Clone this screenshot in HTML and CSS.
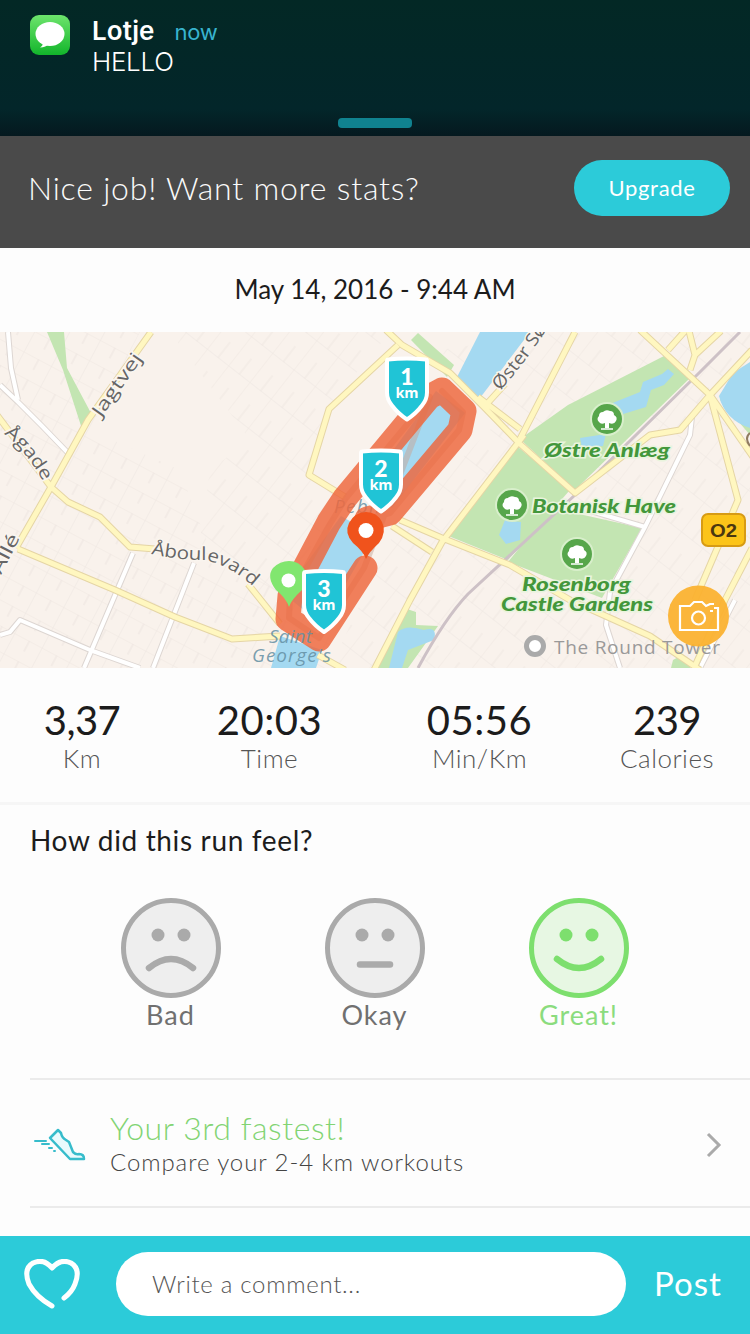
FILE: index.html
```html
<!DOCTYPE html>
<html lang="en">
<head>
<meta charset="utf-8">
<title>Run summary</title>
<link rel="stylesheet" href="styles.css">
</head>
<body>
<div class="screen">
  <header class="notice">
    <svg class="notice-icon" viewBox="0 0 40 40"><defs><linearGradient id="msg" x2="0" y2="1"><stop offset="0" stop-color="#6de46c"/><stop offset="1" stop-color="#12b52b"/></linearGradient></defs><rect width="40" height="40" rx="9" fill="url(#msg)"/><ellipse cx="20" cy="19" rx="14.500" ry="12" fill="#fff"/><path d="M13 27q0 4-3 5.500q6 0 9-4z" fill="#fff"/></svg>
    <div class="notice-text">
      <div class="notice-head"><b class="sender">Lotje</b><span class="when">now</span></div>
      <div class="message">HELLO</div>
    </div>
    <div class="grabber"></div>
  </header>

  <section class="upsell"><span class="upsell-text">Nice job! Want more stats?</span><button class="upgrade">Upgrade</button></section>
  <div class="date">May 14, 2016 - 9:44 AM</div>

  <svg class="map" viewBox="0 332 750 336">
    <defs>
      <pattern id="blocksA" width="31" height="23" patternUnits="userSpaceOnUse" patternTransform="rotate(28)"><path d="M0 0H31M0 0V23M17 0V12" class="lane"/></pattern>
      <pattern id="blocksB" width="37" height="27" patternUnits="userSpaceOnUse" patternTransform="rotate(-52)"><path d="M0 0H37M0 0V27M0 14H20" class="lane"/></pattern>
      <g id="tree"><circle r="16" fill="#57a64b" stroke="#d8efcb" stroke-width="2"/><path d="M-2 9V4Q-6 6-8 3Q-11 0-8-3Q-8-7-4-7Q-1-10 3-8Q7-8 7-4Q11-2 9 2Q7 6 2 4V9Z" fill="#fff"/><path d="M-6 10H6" stroke="#fff" stroke-width="1.500"/></g>
      <path id="shield" d="M-19-29Q0-31 19-29Q20-29 20-27V4Q20 11 15 17Q9 25 0 31Q-9 25-15 17Q-20 11-20 4V-27Q-20-29-19-29Z" fill="#20c4d6" stroke="#fff" stroke-width="4" stroke-linejoin="round"/>
      <path id="labelJagtvej" d="M101 418L145 355"/>
      <path id="labelAgade" d="M4 434Q28 452 46 487"/>
      <path id="labelAlle" d="M1 575L22 534"/>
      <path id="labelAbou" d="M151 554Q178 560 204 560Q232 565 260 593"/>
      <path id="labelOster" d="M500 391Q526 362 550 324"/>
    </defs>
    <rect y="332" width="750" height="336" fill="#f9f2ec"/>
    <path d="M0 332H140L90 430L180 470L210 550L330 610V668H0Z" fill="url(#blocksA)"/>
    <path d="M170 332H390L330 405L310 480L350 500L270 600L200 540L210 470L250 440Z" fill="url(#blocksB)"/>
    <path d="M400 520L500 420L440 350L560 332H750V668H330Z" fill="url(#blocksB)"/>

    <g fill="#c3e5b2">
      <path d="M47 332H64L67 368L92 415L83 432L63 370Z"/>
      <path d="M411 340L418 333L454 365L447 377Z"/>
      <path d="M520 439L568 405L664 356L691 377L575 490Z"/>
      <path d="M446 535L518 447L570 490L508 560Z"/>
      <path d="M552 508L642 528L602 598L508 562Z"/>
      <path d="M375 668L404 608L416 612V625L438 626L408 668Z"/>
      <path d="M673 660L682 655L690 660V668H671Z"/>
      <path d="M738 375L750 365V435L720 400Z"/>
    </g>
    <g fill="#a4d9f1">
      <path d="M480 332H530L480 398L456 379Z"/>
      <path d="M436 391L465 413L392 508L366 488Z"/>
      <path d="M341 516L374 535L322 625L284 594Z"/>
      <path d="M280 636L322 650L316 668H271Z"/>
      <path d="M398 632Q406 624 424 630Q438 626 434 640L408 650L402 668H389Z"/>
      <path d="M505 520L521 522L520 540L506 544L499 535Z"/>
      <path d="M580 438L606 434L603 446L582 448Z"/>
      <path d="M610 404L640 392L643 382L662 374L668 369L674 374L664 385L651 390L646 407L620 415Z"/>
      <path d="M733 373L750 362V428Q725 420 719 396Z"/>
    </g>

    <g class="side-edge"><path id="side" d="M8 332L11 368L18 400M0 385L18 402L42 426L70 455M0 635L10 632L20 620L90 650L140 668M133 553L84 668M194 563L153 668M692 417L690 435L645 527L610 592L606 625L620 668M560 502L645 527M700 668L735 600"/></g>
    <use href="#side" class="side-core"/>
    <path d="M418 668Q445 618 468 594L575 495L700 372L740 332" fill="none" stroke="#cdc1c6" stroke-width="3"/>
    <g class="main-edge"><path id="main" d="M151 332L88 420L51 487L16 548M-3 415L51 487L68 502L100 517L130 547L155 549M248 584L280 624M18 549L115 590L175 617L232 639L280 636M318 655L345 670M386 330L402 345L450 373L484 407L520 444L575 493L650 435L680 430L710 395L752 350M398 345L329 409L309 475L345 497M484 407L505 384M478 397L520 429M520 439L575 332M524 435L442 542L410 600L374 670M400 520L442 538L510 565L570 600L650 636L700 670M392 526L432 552M640 330L710 395L753 457M710 395L738 500L695 600M668 350L685 331M689 331L695 355L690 370M695 355L721 331M752 548L725 600L694 668"/></g>
    <use href="#main" class="main-core"/>

    <text x="334" y="513" textLength="46" class="water-label">Pebli</text>
    <path d="M442 391L463 412L459 430L390 513L367 519M364 568L319 638L289 618L290 596L330 524L346 498L430 397Z" class="route-fine"/>
    <path d="M442 390L464 411L460 430L390 513L367 519M365 568L319 639L288 619L290 596L329 522L345 498L429 397L442 390" class="route-wide"/>

    <g class="street-label">
      <text textLength="73" lengthAdjust="spacingAndGlyphs"><textPath href="#labelJagtvej">Jagtvej</textPath></text>
      <text textLength="62" lengthAdjust="spacingAndGlyphs"><textPath href="#labelAgade">Ågade</textPath></text>
      <text textLength="42" lengthAdjust="spacingAndGlyphs"><textPath href="#labelAlle">Allé</textPath></text>
      <text textLength="110" lengthAdjust="spacingAndGlyphs"><textPath href="#labelAbou">Åboulevard</textPath></text>
      <text textLength="78" lengthAdjust="spacingAndGlyphs"><textPath href="#labelOster">Øster Sø</textPath></text>
    </g>
    <text x="269" y="643" textLength="43" class="water-label">Saint</text>
    <text x="252" y="662" textLength="79" class="water-label">George's</text>
    <g class="park-label">
      <text x="544" y="457" textLength="126" lengthAdjust="spacingAndGlyphs">Østre Anlæg</text>
      <text x="532" y="513" textLength="144" lengthAdjust="spacingAndGlyphs">Botanisk Have</text>
      <text x="522" y="591" textLength="109" lengthAdjust="spacingAndGlyphs">Rosenborg</text>
      <text x="501" y="611" textLength="152" lengthAdjust="spacingAndGlyphs">Castle Gardens</text>
    </g>
    <use href="#tree" x="607" y="419"/><use href="#tree" x="512" y="505"/><use href="#tree" x="577" y="554"/>
    <circle cx="535" cy="646" r="8.500" fill="#fff" stroke="#aaa" stroke-width="5"/>
    <rect x="702" y="514" width="43" height="32" rx="6" fill="#fcc419" stroke="#d79b14" stroke-width="2"/>
    <text x="710" y="537" textLength="27" lengthAdjust="spacingAndGlyphs" class="road-number">O2</text>
    <path d="M750 433Q744 438 750 446" fill="none" stroke="#907b60" stroke-width="2"/>

    <path d="M289 607Q286 598 276 590Q266 577 273 568Q280 561 289 561Q299 561 305 570Q309 580 302 590Q291 600 289 607Z" fill="#81e66f"/>
    <circle cx="288.500" cy="580.500" r="7" fill="#fff"/>
    <path d="M366 559Q363 551 353 543Q344 533 349 523Q355 512 366 512Q377 512 382 522Q387 532 379 543Q369 552 366 559Z" fill="#f0531c"/>
    <circle cx="366" cy="530.500" r="7.500" fill="#fff"/>
    <use href="#shield" x="407" y="388.500"/><use href="#shield" x="381" y="480.500"/><use href="#shield" x="324" y="601"/>
    <g class="split-number"><text x="407" y="385">1</text><text x="381" y="477">2</text><text x="324" y="597">3</text></g>
    <g class="split-unit"><text x="407" y="398">km</text><text x="381" y="490">km</text><text x="324" y="610">km</text></g>
    <text x="554" y="654" textLength="166" class="place-label">The Round Tower</text>
    <circle cx="698.500" cy="616" r="30.500" fill="#fbb130" fill-opacity="0.940"/>
    <path d="M686 606H680V630H718V608H714M714 604H710L706 606L702 602H694L690 606H684" fill="none" stroke="#fff" stroke-width="2.200"/>
    <circle cx="698.500" cy="618" r="6.500" fill="none" stroke="#fff" stroke-width="2.200"/><path d="M710 611H713" stroke="#fff" stroke-width="2"/>
  </svg>

  <section class="stats">
    <div class="stat"><div class="value tight">3,37</div><div class="label">Km</div></div>
    <div class="stat"><div class="value">20:03</div><div class="label">Time</div></div>
    <div class="stat"><div class="value">05:56</div><div class="label">Min/Km</div></div>
    <div class="stat"><div class="value tight">239</div><div class="label">Calories</div></div>
  </section>

  <section class="feel">
    <h2 class="question">How did this run feel?</h2>
    <div class="moods">
      <div class="mood"><svg class="face" viewBox="0 0 100 100"><circle cx="50" cy="50" r="47.500" class="ring"/><circle cx="37" cy="37" r="6.500" class="eye"/><circle cx="63" cy="37" r="6.500" class="eye"/><path d="M28 70Q50 52 72 70" class="mouth"/></svg><span class="mood-name">Bad</span></div>
      <div class="mood"><svg class="face" viewBox="0 0 100 100"><circle cx="50" cy="50" r="47.500" class="ring"/><circle cx="37" cy="37" r="6.500" class="eye"/><circle cx="63" cy="37" r="6.500" class="eye"/><path d="M35 66.500H65" class="mouth"/></svg><span class="mood-name">Okay</span></div>
      <div class="mood selected"><svg class="face" viewBox="0 0 100 100"><circle cx="50" cy="50" r="47.500" class="ring"/><circle cx="37" cy="37" r="6.500" class="eye"/><circle cx="63" cy="37" r="6.500" class="eye"/><path d="M28 61Q50 79 72 61" class="mouth"/></svg><span class="mood-name">Great!</span></div>
    </div>
  </section>

  <section class="ranking">
    <svg class="shoe" viewBox="0 0 52 34"><path class="shoe-body" d="M16 10L24 2L27 5Q28 10 32 12L35 14L39 24Q42 27 45 26Q50 26 50 31H36Z"/><path d="M1 13H12M8 16H15M15 20H18M20 23H21"/></svg>
    <div class="ranking-text"><div class="rank">Your 3rd fastest!</div><div class="compare">Compare your 2-4 km workouts</div></div>
    <svg class="chevron" viewBox="0 0 16 26"><path d="M2 2L13 13L2 24"/></svg>
  </section>

  <footer class="composer">
    <svg class="heart" viewBox="0 0 56 50"><path d="M28 47Q12 38 5 25Q-1 10 9 4Q20-1 28 9Q37-1 47 4Q57 10 51 25Q48 33 40 39"/></svg>
    <div class="comment">Write a comment...</div>
    <span class="post">Post</span>
  </footer>
</div>
</body>
</html>
```
FILE: styles.css
```css
* { box-sizing: border-box; }
body { margin: 0; background: #fdfdfd; font-family: Lato, "Open Sans", sans-serif; color: #1c1c1c; }
.screen { width: 750px; height: 1334px; display: flex; flex-direction: column; overflow: hidden; }

.notice { position: relative; height: 136px; flex: none; display: flex; gap: 22px; padding: 15px 30px 0; background: linear-gradient(#032825, #03262a 80%, #05191f); font-family: Inter, Roboto, sans-serif; color: #fff; }
.notice-icon { width: 40px; height: 40px; }
.notice-text { font-size: 26px; line-height: 31px; }
.notice-head { display: flex; gap: 20px; height: 31px; }
.sender { font-weight: 600; letter-spacing: 0.100px; }
.when { color: #38b4cf; font-size: 22px; line-height: 35px; letter-spacing: -0.300px; }
.message { font-weight: 300; letter-spacing: -0.300px; }
.grabber { position: absolute; left: 338px; bottom: 8px; width: 74px; height: 10px; border-radius: 4px; background: #10828f; }

.upsell { height: 112px; flex: none; display: flex; align-items: center; justify-content: space-between; padding: 0 20px 8px 28px; background: #4a4a4a; }
.upsell-text { padding-bottom: 1px; color: #fafafa; font-size: 32px; font-weight: 300; letter-spacing: 0.800px; }
.upgrade { width: 156px; height: 56px; padding: 0 0 2px; border: 0; border-radius: 28px; background: #2ccbd9; color: #fff; font: 400 22px Lato, sans-serif; letter-spacing: 0.700px; }
.date { height: 84px; flex: none; text-align: center; font-size: 26px; line-height: 83px; }

.map { width: 750px; height: 336px; flex: none; display: block; }
.lane { fill: none; stroke: #efe7e2; stroke-width: 1.200; }
.side-edge, .side-core, .main-edge, .main-core { fill: none; stroke-linejoin: round; }
.side-edge { stroke: #ddd6d2; stroke-width: 6; }
.side-core { stroke: #fff; stroke-width: 4; }
.main-edge { stroke: #e5d5a5; stroke-width: 7; }
.main-core { stroke: #fff7c0; stroke-width: 5; }
.route-wide, .route-fine { fill: none; stroke-linejoin: round; stroke-linecap: round; }
.route-wide { stroke: #ee653b; stroke-opacity: 0.820; stroke-width: 25; }
.route-fine { stroke: #c8a598; stroke-opacity: 0.500; stroke-width: 6; }
.street-label { font: 500 18px "Open Sans", sans-serif; fill: #666; stroke: #faf5ef; stroke-width: 3px; paint-order: stroke; }
.water-label { font: italic 19px "Open Sans", sans-serif; fill: #638fa3; fill-opacity: 0.850; }
.park-label { font: italic 900 19px Lato, sans-serif; fill: #43973b; stroke: #e9f4dd; stroke-width: 3px; paint-order: stroke; }
.place-label { font: 400 19px "Open Sans", sans-serif; fill: #999; }
.road-number { font: 700 19px "Liberation Sans", Arial, sans-serif; fill: #4a3710; }
.split-number { font: 900 23px Lato, sans-serif; fill: #fff; text-anchor: middle; }
.split-unit { font: 700 14.500px "Open Sans", sans-serif; fill: #fff; text-anchor: middle; }

.stats { height: 137px; flex: none; display: grid; grid-template-columns: 164px 211px 209px 166px; padding-top: 28px; border-bottom: 3px solid #f6f6f6; }
.stat { display: flex; flex-direction: column; align-items: center; }
.value { font-size: 40px; line-height: 48px; letter-spacing: 0.500px; }
.tight { letter-spacing: -0.600px; }
.label { font-size: 26px; line-height: 29px; font-weight: 300; color: #555; letter-spacing: 0.500px; }

.feel { height: 273px; flex: none; padding: 18px 31px 0 30px; }
.question { margin: 0; font-size: 28px; line-height: 34px; font-weight: 400; letter-spacing: 0.650px; }
.moods { display: flex; justify-content: center; gap: 104px; padding-top: 41px; }
.mood { width: 100px; display: flex; flex-direction: column; align-items: center; color: #aaa; }
.mood-name { font-size: 27px; line-height: 34px; letter-spacing: 1px; color: #707070; }
.face { width: 100px; height: 100px; display: block; }
.ring { fill: #eee; stroke: currentColor; stroke-width: 5; }
.eye { fill: currentColor; }
.mouth { fill: none; stroke: currentColor; stroke-width: 6.500; stroke-linecap: round; }
.selected { color: #7ddf6e; }
.selected .ring { fill: #e7f7e3; }
.selected .mood-name { color: #8bdc7e; }

.ranking { height: 130px; flex: none; display: flex; align-items: center; margin-left: 30px; padding: 0 28px 0 4px; border-top: 2px solid #ebebeb; border-bottom: 2px solid #ebebeb; }
.shoe { width: 52px; height: 34px; margin-top: 3px; fill: none; stroke: #37bccb; stroke-width: 2; stroke-linejoin: round; stroke-linecap: round; }
.shoe-body { fill: #e9fafd; stroke-width: 2.500; }
.ranking-text { flex: 1; padding: 1px 0 0 24px; }
.rank { font-size: 32px; line-height: 37px; font-weight: 300; letter-spacing: 0.550px; color: #82d473; }
.compare { font-size: 24px; line-height: 32px; font-weight: 300; letter-spacing: 0.920px; color: #444; }
.chevron { width: 16px; height: 26px; margin-top: 3px; fill: none; stroke: #aaa; stroke-width: 3; }

.composer { height: 98px; flex: none; display: flex; align-items: center; margin-top: auto; padding: 0 28px 2px 24px; background: #2ccbd9; }
.heart { width: 56px; height: 50px; fill: none; stroke: #fff; stroke-width: 5; stroke-linecap: round; stroke-linejoin: round; }
.comment { width: 510px; height: 64px; flex: none; margin: 0 28px 0 36px; padding-left: 36px; border-radius: 32px; background: #fff; color: #555; font-size: 24px; line-height: 64px; font-weight: 300; letter-spacing: 0.700px; }
.post { color: #fff; font-size: 33px; line-height: 40px; padding-bottom: 2px; letter-spacing: 1px; white-space: nowrap; }
```
